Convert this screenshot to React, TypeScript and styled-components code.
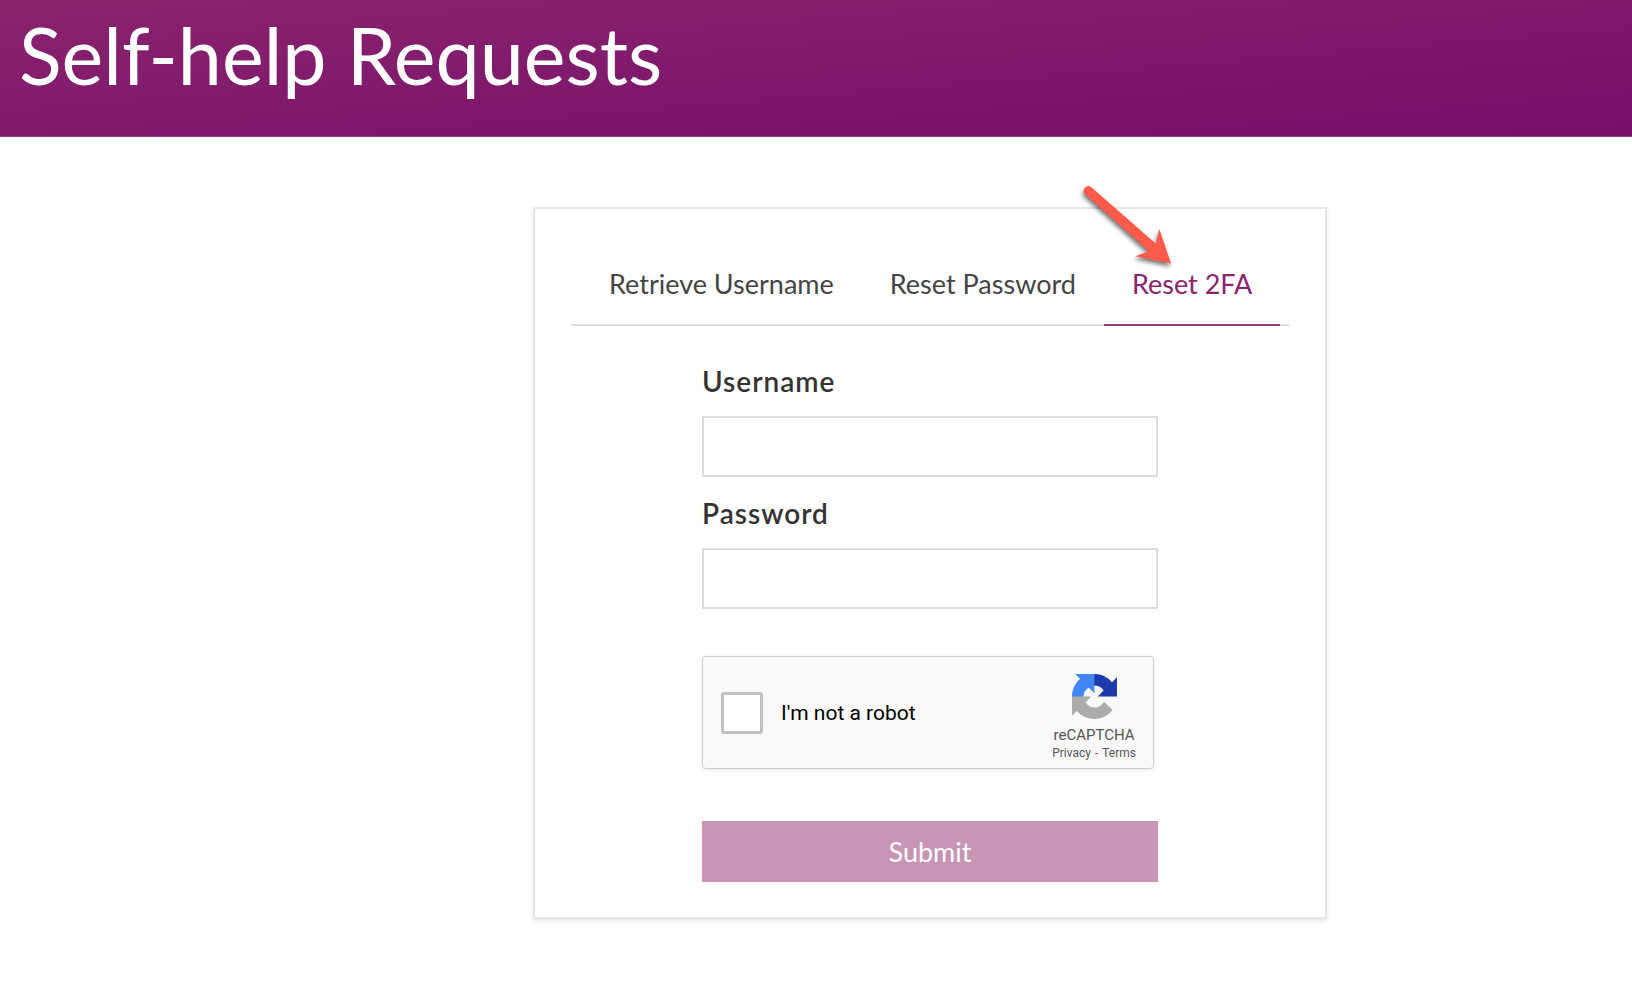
import React from "react";
import styled, { createGlobalStyle, css } from "styled-components";

const GlobalStyle = createGlobalStyle`
  *, *::before, *::after { box-sizing: border-box; }
  body {
    margin: 0;
    background: #fff;
    color: #333;
    font-family: Lato, "Liberation Sans", sans-serif;
    font-size: 27px;
    line-height: 32px;
  }
`;

const Banner = styled.header`
  height: 137px;
  padding: 7px 19px;
  border-bottom: 1px solid #9b3f89;
  background: linear-gradient(to bottom right, #8a246e, #7f196c 50%, #750f69);
`;

const Title = styled.h1`
  margin: 0;
  color: #fff;
  font-size: 79px;
  font-weight: 400;
  line-height: 96px;
`;

const Main = styled.main`
  display: flex;
  justify-content: center;
  padding: 70px 0 62px 228px;
`;

const Card = styled.section`
  width: 794px;
  padding: 48px 36px 35px;
  border: 2px solid #e6e6e6;
  background: #fff;
  box-shadow: 0 2px 4px rgba(0, 0, 0, 0.1);
`;

const TabList = styled.div`
  display: flex;
  padding: 0 10px;
  border-bottom: 2px solid #dcdcdc;
`;

const Tab = styled.button<{ $active?: boolean }>`
  position: relative;
  margin: 0 0 -2px;
  padding: 11px 28px 24px;
  border: 0;
  border-bottom: 2px solid transparent;
  background: none;
  color: #444;
  font: inherit;
  white-space: nowrap;
  ${({ $active }) =>
    $active &&
    css`
      border-bottom-color: #98397f;
      color: #8a246e;
    `}
`;

const Pointer = styled.svg`
  position: absolute;
  top: -71px;
  left: -24px;
  overflow: visible;
  pointer-events: none;
  filter: drop-shadow(-1px 3px 2px rgba(0, 0, 0, 0.55));
`;

const Form = styled.form`
  display: flex;
  flex-direction: column;
  width: 456px;
  margin: 39px auto 0;
`;

const Field = styled.div`
  display: flex;
  flex-direction: column;
  gap: 19px;
  margin-bottom: 20px;
`;

const Label = styled.label`
  font-size: 28px;
  font-weight: 600;
  letter-spacing: 1px;
`;

const TextBox = styled.input`
  width: 100%;
  height: 61px;
  padding: 0 16px;
  border: 2px solid #dcdcdc;
  border-radius: 0;
  background: #fff;
  font: inherit;
`;

const Captcha = styled.div`
  display: flex;
  align-items: center;
  width: 452px;
  height: 113px;
  margin-top: 27px;
  padding: 0 17px 0 18px;
  border: 1px solid #d0d0d0;
  border-radius: 4px;
  background: #f9f9f9;
  box-shadow: 0 1px 4px rgba(0, 0, 0, 0.1);
  font-family: Roboto, "Liberation Sans", sans-serif;
`;

const CheckBox = styled.input`
  appearance: none;
  width: 42px;
  height: 42px;
  margin: 0 18px 0 0;
  border: 3px solid #c1c1c1;
  border-radius: 3px;
  background: #fff;
`;

const CheckLabel = styled.label`
  flex: 1;
  color: #000;
  font-size: 21px;
  line-height: 26px;
`;

const Brand = styled.div`
  display: flex;
  flex-direction: column;
  align-items: center;
  padding-top: 10px;
  color: #555;
  font-size: 15px;
  line-height: 20px;
`;

const BrandMark = styled.svg`
  margin-bottom: 6px;
`;

const BrandLinks = styled.div`
  display: flex;
  gap: 4px;
  font-size: 12px;
  line-height: 16px;
`;

const BrandLink = styled.a`
  color: inherit;
  text-decoration: none;
`;

const Submit = styled.button`
  height: 61px;
  margin-top: 52px;
  border: 0;
  background: #c894b5;
  color: #fff;
  font: inherit;
`;

const PointerArrow = () => (
  <Pointer width="92" height="78" viewBox="0 0 92 78" aria-hidden="true">
    <path
      fill="#ff5a4a"
      d="M10.8 0.8 L75.7 57.6 L79.3 42.9 L91 77.6 L55.3 70.3 L69 65.3 L4.6 7.8 A4.8 4.8 0 0 1 10.8 0.8 Z"
    />
  </Pointer>
);

const RecaptchaMark = () => (
  <BrandMark width="45" height="45" viewBox="0 0 64 64" aria-hidden="true">
    <path
      fill="#1c3aa9"
      d="M64 31.955l-.033-1.37V4.687l-7.16 7.16C50.948 4.674 42.033.093 32.05.093c-10.4 0-19.622 4.96-25.458 12.64l11.736 11.86a15.55 15.55 0 0 1 4.754-5.334c2.05-1.6 4.952-2.906 8.968-2.906.485 0 .86.057 1.135.163 4.976.393 9.288 3.14 11.828 7.124l-8.307 8.307L64 31.953"
    />
    <path
      fill="#4285f4"
      d="M31.862.094l-1.37.033H4.594l7.16 7.16C4.58 13.147 0 22.06 0 32.046c0 10.4 4.96 19.622 12.64 25.458L24.5 45.768a15.55 15.55 0 0 1-5.334-4.754c-1.6-2.05-2.906-4.952-2.906-8.968 0-.485.057-.86.163-1.135.393-4.976 3.14-9.288 7.124-11.828l8.307 8.307L31.86.095"
    />
    <path
      fill="#ababab"
      d="M.001 32.045l.033 1.37v25.898l7.16-7.16c5.86 7.173 14.774 11.754 24.76 11.754 10.4 0 19.622-4.96 25.458-12.64l-11.736-11.86a15.55 15.55 0 0 1-4.754 5.334c-2.05 1.6-4.952 2.906-8.968 2.906-.485 0-.86-.057-1.135-.163-4.976-.393-9.288-3.14-11.828-7.124l8.307-8.307c-10.522.04-22.4.066-27.295-.005"
    />
  </BrandMark>
);

export default function App() {
  return (
    <>
      <GlobalStyle />
      <Banner>
        <Title>Self-help Requests</Title>
      </Banner>
      <Main>
        <Card>
          <TabList role="tablist">
            <Tab type="button" role="tab" aria-selected={false}>
              Retrieve Username
            </Tab>
            <Tab type="button" role="tab" aria-selected={false}>
              Reset Password
            </Tab>
            <Tab type="button" role="tab" aria-selected $active>
              Reset 2FA
              <PointerArrow />
            </Tab>
          </TabList>
          <Form onSubmit={(event) => event.preventDefault()}>
            <Field>
              <Label htmlFor="username">Username</Label>
              <TextBox id="username" name="username" type="text" />
            </Field>
            <Field>
              <Label htmlFor="password">Password</Label>
              <TextBox id="password" name="password" type="password" />
            </Field>
            <Captcha>
              <CheckBox id="robot" name="robot" type="checkbox" />
              <CheckLabel htmlFor="robot">I'm not a robot</CheckLabel>
              <Brand>
                <RecaptchaMark />
                reCAPTCHA
                <BrandLinks>
                  <BrandLink href="#privacy">Privacy</BrandLink>
                  <span>-</span>
                  <BrandLink href="#terms">Terms</BrandLink>
                </BrandLinks>
              </Brand>
            </Captcha>
            <Submit type="submit" disabled>
              Submit
            </Submit>
          </Form>
        </Card>
      </Main>
    </>
  );
}
